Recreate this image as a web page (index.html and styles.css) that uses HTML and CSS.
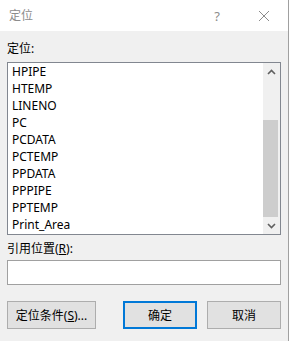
FILE: index.html
```html
<!DOCTYPE html>
<html lang="zh-CN">
<head>
    <meta charset="UTF-8">
    <meta name="viewport" content="width=device-width, initial-scale=1.0">
    <title>定位</title>
    <link rel="stylesheet" href="styles.css">
</head>
<body>
    <div class="dialog">
        <div class="titlebar">
            <span class="title">定位</span>
            <span class="help">?</span>
            <svg class="close" width="12" height="12" viewBox="0 0 12 12">
                <path d="M1 1 L11 11 M11 1 L1 11" stroke="#8c8c8c" stroke-width="1" fill="none"/>
            </svg>
        </div>

        <div class="content">
            <div class="label">定位:</div>

            <div class="listbox">
                <ul class="items">
                    <li>HPIPE</li>
                    <li>HTEMP</li>
                    <li>LINENO</li>
                    <li>PC</li>
                    <li>PCDATA</li>
                    <li>PCTEMP</li>
                    <li>PPDATA</li>
                    <li>PPPIPE</li>
                    <li>PPTEMP</li>
                    <li>Print_Area</li>
                </ul>
                <div class="scrollbar">
                    <div class="arrow">
                        <svg width="9" height="6" viewBox="0 0 9 6">
                            <path d="M1 5 L4.5 1.5 L8 5" stroke="#606060" stroke-width="1.6" fill="none"/>
                        </svg>
                    </div>
                    <div class="track">
                        <div class="thumb"></div>
                    </div>
                    <div class="arrow">
                        <svg width="9" height="6" viewBox="0 0 9 6">
                            <path d="M1 1 L4.5 4.5 L8 1" stroke="#606060" stroke-width="1.6" fill="none"/>
                        </svg>
                    </div>
                </div>
            </div>

            <div class="label ref-label">引用位置(<u>R</u>):</div>
            <div class="input"></div>

            <div class="buttons">
                <button class="btn btn-special">定位条件(<u>S</u>)...</button>
                <button class="btn btn-ok">确定</button>
                <button class="btn btn-cancel">取消</button>
            </div>
        </div>
    </div>
</body>
</html>
```

FILE: styles.css
```css
body {
    margin: 0;
    font-family: "Noto Sans", "Noto Sans CJK SC", sans-serif;
    font-size: 12px;
    color: #000;
}

.dialog {
    width: 288px;
    height: 341px;
    background: #f0f0f0;
    border-right: 1px solid #a0a0a0;
}

.titlebar {
    height: 31px;
    background: #fff;
    display: flex;
    align-items: center;
    padding-left: 9px;
}

.title {
    color: #8c8c8c;
    line-height: 17px;
    flex: 1;
}

.help {
    color: #8c8c8c;
    font-size: 13px;
    width: 12px;
    text-align: center;
    margin-right: 35px;
}

.close {
    margin-right: 18px;
}

.content {
    padding: 0 7px;
}

.label {
    line-height: 17px;
    margin-top: 9px;
}

.listbox {
    margin-top: 5px;
    height: 171px;
    border: 1px solid #828790;
    background: #fff;
    display: flex;
}

.items {
    list-style: none;
    margin: 0;
    padding: 0 0 0 4px;
    flex: 1;
}

.items li {
    line-height: 17px;
    height: 17px;
}

.scrollbar {
    width: 17px;
    background: #f0f0f0;
    display: flex;
    flex-direction: column;
}

.arrow {
    height: 17px;
    display: flex;
    align-items: center;
    justify-content: center;
}

.track {
    flex: 1;
    display: flex;
    flex-direction: column;
    justify-content: flex-end;
}

.thumb {
    height: 97px;
    width: 15px;
    background: #cdcdcd;
}

.ref-label {
    margin-top: 5px;
}

.input {
    margin-top: 3px;
    height: 23px;
    border: 1px solid #a0a0a0;
    background: #fff;
}

.buttons {
    display: flex;
    margin-top: 16px;
}

.btn {
    font: inherit;
    color: #000;
    height: 28px;
    background: #e1e1e1;
    border: 1px solid #adadad;
    padding: 0;
}

.btn-special {
    width: 89px;
}

.btn-ok {
    width: 74px;
    margin-left: 27px;
    border: 2px solid #0078d7;
}

.btn-cancel {
    width: 74px;
    margin-left: 10px;
}
```
